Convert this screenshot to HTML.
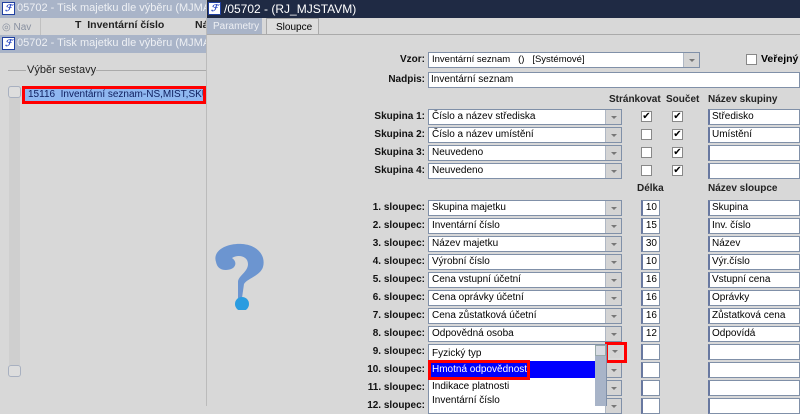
<!DOCTYPE html>
<html><head><meta charset="utf-8"><style>
*{box-sizing:border-box;margin:0;padding:0}
body{width:800px;height:406px;overflow:hidden;background:#d8d8d8;font-family:"Liberation Sans",sans-serif;font-size:11px;color:#000;position:relative}
.a{position:absolute;white-space:nowrap}
.clip{position:absolute;overflow:hidden;white-space:nowrap}
.lbl{position:absolute;font-weight:bold;text-align:right;width:120px;color:#111;font-size:10px}
.sel{position:absolute;height:16px;background:#fff;border:1px solid #8090a8;padding-left:3px;line-height:14px;font-size:10px}
.sel .arr{position:absolute;right:0;top:0;width:16px;height:14px;background:#d4d4d4;border-left:1px solid #b0b8c4}
.sel .arr:after{content:"";position:absolute;left:5px;top:6px;border-left:3px solid transparent;border-right:3px solid transparent;border-top:3px solid #777}
.in{position:absolute;height:16px;background:#fff;border:1px solid #8090a8;border-left:2px solid #6878a0;line-height:14px;padding-left:2px;font-size:10px}
.cb{position:absolute;width:11px;height:11px;background:#fff;border:1px solid #888;font-size:10px;line-height:9px;text-align:center}
.hd{position:absolute;font-weight:bold;color:#222;font-size:10px}
</style></head><body>
<!-- left window -->
<div class="a" style="left:0;top:0;width:206px;height:18px;background:#a9b4c8"></div>
<div class="a" style="left:2px;top:2px;width:13px;height:13px;background:#fff;border:1px solid #2040a0;color:#2040c0;font-weight:bold;font-style:italic;font-size:9px;line-height:11px;text-align:center">ℱ</div>
<div class="clip" style="left:17px;top:2px;width:189px;color:#eef0f4;font-size:11px">05702 - Tisk majetku dle výběru (MJMAJ</div>
<div class="a" style="left:2px;top:22px;color:#8890a0;font-size:10px">◎ Nav</div>
<div class="a" style="left:40px;top:18px;width:1px;height:17px;background:#c0c0c0"></div>
<div class="a" style="left:75px;top:19px;font-weight:bold;color:#222;font-size:10.5px">T&nbsp; Inventární číslo</div>
<div class="clip" style="left:195px;top:19px;width:11px;font-weight:bold;color:#222;font-size:10.5px">Ná</div>
<div class="a" style="left:0;top:35px;width:206px;height:18px;background:#a9b4c8"></div>
<div class="a" style="left:2px;top:37px;width:13px;height:13px;background:#fff;border:1px solid #2040a0;color:#2040c0;font-weight:bold;font-style:italic;font-size:9px;line-height:11px;text-align:center">ℱ</div>
<div class="clip" style="left:17px;top:37px;width:189px;color:#eef0f4;font-size:11px">05702 - Tisk majetku dle výběru (MJMAJ</div>
<div class="a" style="left:8px;top:70px;width:18px;height:1px;background:#aaa"></div>
<div class="a" style="left:27px;top:64px;color:#222;font-size:11px">Výběr sestavy</div>
<div class="a" style="left:96px;top:70px;width:110px;height:1px;background:#aaa"></div>
<div class="a" style="left:9px;top:86px;width:11px;height:279px;background:#cfcfcf"></div>
<div class="a" style="left:8px;top:86px;width:13px;height:12px;border:1px solid #a8b0c0;border-radius:3px;background:#ddd"></div>
<div class="a" style="left:8px;top:365px;width:13px;height:12px;border:1px solid #a8b0c0;border-radius:3px;background:#ddd"></div>
<div class="a" style="left:22px;top:86px;width:184px;height:18px;border:3px solid #f00;background:#8fb7f0"></div>
<div class="clip" style="left:28px;top:89px;width:175px;color:#102060;font-size:10px">15116&nbsp; Inventární seznam-NS,MIST,SKUP</div>
<div class="a" style="left:206px;top:0;width:1px;height:406px;background:#bbb"></div>
<!-- right window -->
<div class="a" style="left:207px;top:0;width:593px;height:18px;background:#1f2a44"></div>
<div class="a" style="left:208px;top:2px;width:13px;height:13px;background:#fff;border:1px solid #2040a0;color:#2040c0;font-weight:bold;font-style:italic;font-size:9px;line-height:11px;text-align:center">ℱ</div>
<div class="a" style="left:224px;top:2px;color:#fff;font-size:12px">/05702 - (RJ_MJSTAVM)</div>
<div class="a" style="left:207px;top:18px;width:55px;height:16px;background:#a9b4c8;color:#eef0f4;padding:3px 0 0 6px;font-size:10px">Parametry</div>
<div class="a" style="left:266px;top:18px;width:53px;height:17px;background:#ddd;border:1px solid #aaa;border-bottom:none;padding:3px 0 0 9px;font-size:10px">Sloupce</div>
<div class="a" style="left:207px;top:34px;width:593px;height:1px;background:#aaa"></div>
<!-- question icon -->
<svg class="a" style="left:208px;top:240px" width="60" height="70" viewBox="0 0 60 70">
<path d="M8 22 C4 10 20 3 34 4 C50 5 58 16 55 27 C52 36 40 38 36 44 L34 58 L30 58 L30 42 C30 36 40 32 40 24 C40 16 30 14 24 18 C30 22 28 30 18 30 C12 30 9 27 8 22Z" fill="#6c95d0"/>
<circle cx="34" cy="64" r="7" fill="#2a9ce0"/>
</svg>
<!-- form -->
<div class="lbl" style="left:305px;top:54px">Vzor:</div>
<div class="sel" style="left:428px;top:52px;width:272px;font-size:9.5px">Inventární seznam&nbsp;&nbsp; ()&nbsp;&nbsp; [Systémové]<div class="arr"></div></div>
<div class="cb" style="left:746px;top:54px"></div>
<div class="a" style="left:761px;top:53px;font-weight:bold;font-size:10.5px">Veřejný</div>
<div class="lbl" style="left:305px;top:74px">Nadpis:</div>
<div class="in" style="left:428px;top:72px;width:372px;border-left:1px solid #8090a8">Inventární seznam</div>
<div class="hd" style="left:609px;top:94px">Stránkovat</div>
<div class="hd" style="left:666px;top:94px">Součet</div>
<div class="hd" style="left:708px;top:94px">Název skupiny</div>
<div class="lbl" style="left:305px;top:111px">Skupina 1:</div><div class="sel" style="left:428px;top:109px;width:194px">Číslo a název střediska<div class="arr"></div></div><div class="cb" style="left:641px;top:111px">✔</div><div class="cb" style="left:672px;top:111px">✔</div><div class="in" style="left:708px;top:109px;width:92px">Středisko</div>
<div class="lbl" style="left:305px;top:129px">Skupina 2:</div><div class="sel" style="left:428px;top:127px;width:194px">Číslo a název umístění<div class="arr"></div></div><div class="cb" style="left:641px;top:129px"></div><div class="cb" style="left:672px;top:129px">✔</div><div class="in" style="left:708px;top:127px;width:92px">Umístění</div>
<div class="lbl" style="left:305px;top:147px">Skupina 3:</div><div class="sel" style="left:428px;top:145px;width:194px">Neuvedeno<div class="arr"></div></div><div class="cb" style="left:641px;top:147px"></div><div class="cb" style="left:672px;top:147px">✔</div><div class="in" style="left:708px;top:145px;width:92px"></div>
<div class="lbl" style="left:305px;top:165px">Skupina 4:</div><div class="sel" style="left:428px;top:163px;width:194px">Neuvedeno<div class="arr"></div></div><div class="cb" style="left:641px;top:165px"></div><div class="cb" style="left:672px;top:165px">✔</div><div class="in" style="left:708px;top:163px;width:92px"></div>
<div class="hd" style="left:637px;top:183px">Délka</div>
<div class="hd" style="left:708px;top:183px">Název sloupce</div>
<div class="lbl" style="left:305px;top:202px">1. sloupec:</div><div class="sel" style="left:428px;top:200px;width:194px">Skupina majetku<div class="arr"></div></div><div class="in" style="left:641px;top:200px;width:19px;text-align:right;padding-right:2px">10</div><div class="in" style="left:708px;top:200px;width:92px">Skupina</div>
<div class="lbl" style="left:305px;top:220px">2. sloupec:</div><div class="sel" style="left:428px;top:218px;width:194px">Inventární číslo<div class="arr"></div></div><div class="in" style="left:641px;top:218px;width:19px;text-align:right;padding-right:2px">15</div><div class="in" style="left:708px;top:218px;width:92px">Inv. číslo</div>
<div class="lbl" style="left:305px;top:238px">3. sloupec:</div><div class="sel" style="left:428px;top:236px;width:194px">Název majetku<div class="arr"></div></div><div class="in" style="left:641px;top:236px;width:19px;text-align:right;padding-right:2px">30</div><div class="in" style="left:708px;top:236px;width:92px">Název</div>
<div class="lbl" style="left:305px;top:256px">4. sloupec:</div><div class="sel" style="left:428px;top:254px;width:194px">Výrobní číslo<div class="arr"></div></div><div class="in" style="left:641px;top:254px;width:19px;text-align:right;padding-right:2px">10</div><div class="in" style="left:708px;top:254px;width:92px">Výr.číslo</div>
<div class="lbl" style="left:305px;top:274px">5. sloupec:</div><div class="sel" style="left:428px;top:272px;width:194px">Cena vstupní účetní<div class="arr"></div></div><div class="in" style="left:641px;top:272px;width:19px;text-align:right;padding-right:2px">16</div><div class="in" style="left:708px;top:272px;width:92px">Vstupní cena</div>
<div class="lbl" style="left:305px;top:292px">6. sloupec:</div><div class="sel" style="left:428px;top:290px;width:194px">Cena oprávky účetní<div class="arr"></div></div><div class="in" style="left:641px;top:290px;width:19px;text-align:right;padding-right:2px">16</div><div class="in" style="left:708px;top:290px;width:92px">Oprávky</div>
<div class="lbl" style="left:305px;top:310px">7. sloupec:</div><div class="sel" style="left:428px;top:308px;width:194px">Cena zůstatková účetní<div class="arr"></div></div><div class="in" style="left:641px;top:308px;width:19px;text-align:right;padding-right:2px">16</div><div class="in" style="left:708px;top:308px;width:92px">Zůstatková cena</div>
<div class="lbl" style="left:305px;top:328px">8. sloupec:</div><div class="sel" style="left:428px;top:326px;width:194px">Odpovědná osoba<div class="arr"></div></div><div class="in" style="left:641px;top:326px;width:19px;text-align:right;padding-right:2px">12</div><div class="in" style="left:708px;top:326px;width:92px">Odpovídá</div>
<div class="lbl" style="left:305px;top:346px">9. sloupec:</div><div class="in" style="left:641px;top:344px;width:19px"></div><div class="in" style="left:708px;top:344px;width:92px"></div>
<div class="lbl" style="left:305px;top:364px">10. sloupec:</div><div class="sel" style="left:428px;top:362px;width:194px"><div class="arr"></div></div><div class="in" style="left:641px;top:362px;width:19px"></div><div class="in" style="left:708px;top:362px;width:92px"></div>
<div class="lbl" style="left:305px;top:382px">11. sloupec:</div><div class="sel" style="left:428px;top:380px;width:194px"><div class="arr"></div></div><div class="in" style="left:641px;top:380px;width:19px"></div><div class="in" style="left:708px;top:380px;width:92px"></div>
<div class="lbl" style="left:305px;top:400px">12. sloupec:</div><div class="sel" style="left:428px;top:398px;width:194px"><div class="arr"></div></div><div class="in" style="left:641px;top:398px;width:19px"></div><div class="in" style="left:708px;top:398px;width:92px"></div>
<!-- 9th arrow with red box -->
<div class="sel" style="left:606px;top:344px;width:16px;border:none;background:none"><div class="arr"></div></div>
<div class="a" style="left:605px;top:342px;width:22px;height:21px;border:3px solid #f00"></div>
<!-- dropdown list -->
<div class="a" style="left:428px;top:344px;width:179px;height:62px;background:#fff;border:1px solid #8090a8;border-bottom:none"></div>
<div class="a" style="left:595px;top:345px;width:11px;height:61px;background:#a8b4c8"></div>
<div class="a" style="left:595px;top:345px;width:11px;height:11px;background:#d8dce4;border:1px solid #9aa"></div>
<div class="a" style="left:432px;top:348px;font-size:10px">Fyzický typ</div>
<div class="a" style="left:429px;top:361px;width:166px;height:17px;background:#0000ff"></div>
<div class="a" style="left:428px;top:360px;width:102px;height:20px;border:3px solid #f00"></div>
<div class="a" style="left:432px;top:364px;font-size:10px;color:#fff">Hmotná odpovědnost</div>
<div class="a" style="left:432px;top:381px;font-size:10px">Indikace platnosti</div>
<div class="a" style="left:432px;top:395px;font-size:10px">Inventární číslo</div>
</body></html>
